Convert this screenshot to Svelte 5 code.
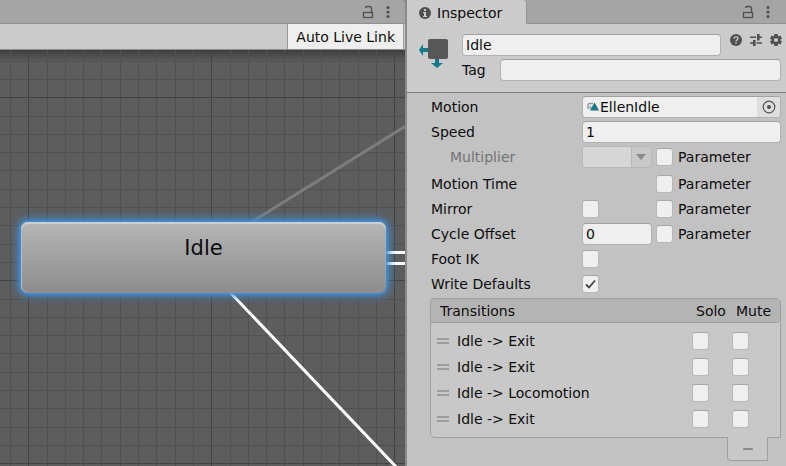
<script>
  const steps = Array.from({ length: 120 }, (_, i) => i - 5);
  const vertical = steps.map((i) => ({ at: Math.floor(28.7 + i * 18.3), major: i % 10 === 0 }));
  const horizontal = steps.map((i) => ({ at: Math.floor(47.7 + i * 18.3), major: i % 10 === 0 }));

  const transitions = ['Idle -> Exit', 'Idle -> Exit', 'Idle -> Locomotion', 'Idle -> Exit'];
</script>

{#snippet windowControls()}
  <div class="window-controls">
    <button aria-label="Lock">
      <svg width="12" height="14" viewBox="0 0 12 14" fill="none" stroke="#505050" stroke-width="1.3">
        <rect x="1.5" y="7.5" width="9" height="5" />
        <path d="M9.5 7V3.5Q9.5 1.5 7.5 1.5H5.5Q3.5 1.5 3.5 3" />
      </svg>
    </button>
    <button aria-label="Menu">
      <svg width="4" height="14" viewBox="0 0 4 14" fill="#505050">
        <circle cx="2" cy="2.5" r="1.6" /><circle cx="2" cy="7" r="1.6" /><circle cx="2" cy="11.5" r="1.6" />
      </svg>
    </button>
  </div>
{/snippet}

{#snippet parameter(id)}
  <div class="param">
    <input type="checkbox" {id} />
    <label for={id}>Parameter</label>
  </div>
{/snippet}

<div class="editor">
  <section class="animator">
    <div class="tabbar">{@render windowControls()}</div>
    <div class="toolbar"><button>Auto Live Link</button></div>
    <div class="canvas">
      <svg class="graph" width="100%" height="100%">
        {#each vertical as line}
          <rect x={line.at} y="0" width="1" height="100%" class:major={line.major} class="grid" />
        {/each}
        {#each horizontal as line}
          <rect x="0" y={line.at} width="100%" height="1" class:major={line.major} class="grid" />
        {/each}
        <path d="M242 178L430 61" stroke="#7d7d7d" stroke-width="3" />
        <path d="M380 202.5H440M380 213.5H440M225 237L420 442" stroke="#fff" stroke-width="3" />
      </svg>
      <div class="node">Idle</div>
    </div>
  </section>

  <section class="inspector">
    <div class="tabbar">
      <div class="tab">
        <svg width="12" height="12" viewBox="0 0 12 12">
          <circle cx="6" cy="6" r="6" fill="#505050" />
          <path d="M5 2h2v2H5zM4 5H7v4h1v1H4V9h1V6H4z" fill="#cbcbcb" />
        </svg>
        <span>Inspector</span>
      </div>
      {@render windowControls()}
    </div>

    <header>
      <svg class="state-icon" width="30" height="30" viewBox="0 0 30 30">
        <path d="M0 12L4 6V10H9V14H4V18zM16 20H20V25H24L18 30L12 25H16z" fill="#16798a" />
        <rect x="9" y="1" width="20" height="20" rx="2" fill="#575757" />
      </svg>
      <div class="identity">
        <div class="name-row">
          <input type="text" aria-label="Name" value="Idle" />
          <div class="tools">
            <button aria-label="Help">
              <svg width="12" height="12" viewBox="0 0 12 12">
                <circle cx="6" cy="6" r="6" fill="#505050" />
                <path d="M4 4.7Q4 2.8 6 2.8T8 4.5Q8 5.3 7 5.9T6 7.5" fill="none" stroke="#cbcbcb" stroke-width="1.3" />
                <rect x="5.3" y="8.4" width="1.4" height="1.4" fill="#cbcbcb" />
              </svg>
            </button>
            <button aria-label="Presets">
              <svg width="12" height="12" viewBox="0 0 12 12" fill="#505050">
                <path d="M0 2.5h6V4H0zM7 0h2.6v2.5H12V4H9.600v2.500H7zM0 8.200h3V6h2.600v6H3V9.700H0zM6.500 8.200H12v1.500H6.500z" />
              </svg>
            </button>
            <button aria-label="Settings">
              <svg width="12" height="12" viewBox="0 0 12 12">
                <g fill="#505050">
                  <rect x="4.2" width="3.6" height="12" rx=".5" />
                  <rect x="4.2" width="3.6" height="12" rx=".5" transform="rotate(60 6 6)" />
                  <rect x="4.2" width="3.6" height="12" rx=".5" transform="rotate(120 6 6)" />
                </g>
                <circle cx="6" cy="6" r="3.300" fill="#cbcbcb" stroke="#505050" stroke-width="2.400" />
              </svg>
            </button>
          </div>
        </div>
        <div class="tag-row">
          <label for="tag">Tag</label>
          <input type="text" id="tag" />
        </div>
      </div>
    </header>

    <div class="properties">
      <div class="row">
        <label for="motion">Motion</label>
        <div class="object-field">
          <svg width="12" height="12" viewBox="0 0 12 12">
            <path d="M1 8V4.500Q1 2.500 3 2.500H6M3.500 8V5" fill="none" stroke="#8d9a9c" stroke-width="1.500" />
            <path d="M7.500 1.500L12 9.500H3z" fill="#16798a" />
          </svg>
          <input type="text" id="motion" value="EllenIdle" />
          <button aria-label="Select motion">
            <svg width="14" height="14" viewBox="0 0 14 14">
              <circle cx="7" cy="7" r="5.800" fill="none" stroke="#505050" stroke-width="1.200" />
              <circle cx="7" cy="7" r="2" fill="#505050" />
            </svg>
          </button>
        </div>
      </div>
      <div class="row">
        <label for="speed">Speed</label>
        <input type="text" id="speed" value="1" />
      </div>
      <div class="row">
        <label class="disabled" for="multiplier">Multiplier</label>
        <div class="split">
          <div class="select">
            <select id="multiplier" disabled><option></option></select>
            <svg width="10" height="6" viewBox="0 0 10 6"><path d="M0 0H10L5 6z" fill="#8a8a8a" /></svg>
          </div>
          {@render parameter('multiplier-param')}
        </div>
      </div>
      <div class="row group">
        <span>Motion Time</span>
        <div class="split"><span></span>{@render parameter('time-param')}</div>
      </div>
      <div class="row">
        <label for="mirror">Mirror</label>
        <div class="split"><input type="checkbox" id="mirror" />{@render parameter('mirror-param')}</div>
      </div>
      <div class="row">
        <label for="offset">Cycle Offset</label>
        <div class="split"><input type="text" id="offset" value="0" />{@render parameter('offset-param')}</div>
      </div>
      <div class="row">
        <label for="foot">Foot IK</label>
        <input type="checkbox" id="foot" />
      </div>
      <div class="row">
        <label for="defaults">Write Defaults</label>
        <input type="checkbox" id="defaults" checked />
      </div>
    </div>

    <div class="transitions">
      <table>
        <thead>
          <tr><th class="title">Transitions</th><th class="toggle">Solo</th><th class="toggle">Mute</th></tr>
        </thead>
        <tbody>
          {#each transitions as name}
            <tr>
              <td>
                <div class="transition">
                  <svg width="12" height="6" viewBox="0 0 12 6"><path d="M0 1H12M0 5H12" stroke="#8d8d8d" stroke-width="1.300" /></svg>
                  <span>{name}</span>
                </div>
              </td>
              <td><input type="checkbox" aria-label="Solo {name}" /></td>
              <td><input type="checkbox" aria-label="Mute {name}" /></td>
            </tr>
          {/each}
        </tbody>
      </table>
      <button class="remove" aria-label="Remove transition">
        <svg width="10" height="2" viewBox="0 0 10 2"><rect width="10" height="2" rx="1" fill="#8a8a8a" /></svg>
      </button>
    </div>
  </section>
</div>

<style>
  * { box-sizing: border-box; }

  .editor {
    display: grid;
    grid-template-columns: minmax(0, 405fr) minmax(0, 381fr);
    min-height: 100vh;
    font: 14px/20px 'DejaVu Sans', Verdana, sans-serif;
    color: #0c0c0c;
    background: #c2c2c2;
  }

  button {
    display: flex;
    align-items: center;
    justify-content: center;
    padding: 0;
    border: 0;
    background: none;
    font: inherit;
    color: inherit;
  }
  svg { display: block; flex: none; }

  .tabbar {
    display: flex;
    height: 24px;
    background: #a5a5a5;
    border-bottom: 1px solid #8f8f8f;
  }
  .window-controls {
    display: flex;
    align-items: center;
    gap: 12px;
    margin-left: auto;
    padding-right: 15px;
  }
  .inspector .window-controls { padding-right: 16px; }

  .animator { display: flex; flex-direction: column; background: #8a8a8a; }
  .animator .tabbar { border-top-right-radius: 4px; }
  .toolbar {
    display: flex;
    justify-content: flex-end;
    height: 26px;
    padding-right: 1px;
    background: #cbcbcb;
    border-bottom: 1px solid #8c8c8c;
  }
  .toolbar button {
    padding: 0 8px;
    background: #efefef;
    border: solid #999;
    border-width: 0 1px;
  }

  .canvas {
    position: relative;
    flex: 1;
    overflow: hidden;
    background: #5d5d5d;
  }
  .canvas::before {
    content: '';
    position: absolute;
    inset: 0 0 auto;
    height: 12px;
    background: linear-gradient(#0005, #0000);
  }
  .graph { position: absolute; inset: 0; }
  .grid { fill: #515151; }
  .grid.major { fill: #434343; }
  .node {
    position: absolute;
    left: 21px;
    top: 172px;
    width: 365px;
    height: 71px;
    padding-top: 14px;
    border-radius: 7px;
    font-size: 21px;
    line-height: 24px;
    text-align: center;
    background: linear-gradient(#b6b6b6, #8c8c8c);
    box-shadow: 0 0 3px 1px #3f93e0, 0 0 9px 3px #3f8fd8, inset 0 2px 1px #d0d0d0, inset 1px 0 1px #b8b8b8;
  }

  .inspector { border-left: 2px solid #8a8a8a; }
  .tab {
    display: flex;
    align-items: center;
    gap: 6px;
    height: 24px;
    padding: 2px 24px 0 12px;
    background: #cbcbcb;
    border-right: 1px solid #959595;
    border-top-right-radius: 4px;
  }

  input[type='text'] {
    display: block;
    width: 100%;
    min-width: 0;
    height: 22px;
    padding: 0 3px;
    border: 1px solid #b2b2b2;
    border-top-color: #a0a0a0;
    border-radius: 4px;
    background: #efefef;
    font: inherit;
    color: inherit;
  }
  input[type='checkbox'] {
    display: block;
    appearance: none;
    width: 17px;
    height: 18px;
    margin: 0;
    border: 1px solid #b8b8b8;
    border-top-color: #a6a6a6;
    border-radius: 3px;
    background: #efefef;
  }
  input[type='checkbox']:checked {
    background: #efefef url("data:image/svg+xml,%3Csvg xmlns='http://www.w3.org/2000/svg' viewBox='0 0 15 16'%3E%3Cpath d='M3 8.500L6 11.500L12 4.500' fill='none' stroke='%23444' stroke-width='1.800'/%3E%3C/svg%3E") center / 15px 16px no-repeat;
  }

  header {
    display: flex;
    gap: 13px;
    padding: 10px 5px 11px 12px;
    background: #cbcbcb;
    border-bottom: 1px solid #808080;
  }
  .state-icon { margin-top: 4px; }
  .identity { flex: 1; min-width: 0; }
  .name-row { display: flex; gap: 9px; }
  .tools {
    display: flex;
    gap: 8px;
    padding: 0 0 10px;
    margin-right: -1px;
  }
  .tag-row {
    display: flex;
    align-items: center;
    gap: 14px;
    margin-top: 3px;
  }

  .properties {
    display: grid;
    gap: 3px;
    padding: 3px 5px 3px 24px;
  }
  .row {
    display: grid;
    grid-template-columns: 151px minmax(0, 1fr);
    align-items: center;
    height: 22px;
  }
  .row.group { margin-top: 2px; }
  .disabled { padding-left: 19px; color: #737373; }
  .split {
    display: grid;
    grid-template-columns: 70px 1fr;
    align-items: center;
    gap: 4px;
  }
  .param { display: flex; align-items: center; gap: 5px; }

  .object-field {
    display: flex;
    align-items: center;
    height: 22px;
    padding-left: 4px;
    border: 1px solid #b2b2b2;
    border-top-color: #a0a0a0;
    border-radius: 4px;
    background: #efefef;
    overflow: hidden;
  }
  .object-field input[type='text'] {
    flex: 1;
    padding: 0 1px;
    border: 0;
    background: none;
  }
  .object-field button { flex: none; width: 23px; height: 20px; background: #dedede; }

  .select { display: grid; align-items: center; }
  .select > * { grid-area: 1 / 1; }
  .select select {
    width: 100%;
    height: 22px;
    appearance: none;
    border: 1px solid #b8b8b8;
    border-radius: 3px;
    opacity: 1;
    background: linear-gradient(90deg, #d6d6d6 48px, #b8b8b8 48px 49px, #c8c8c8 49px);
  }
  .select svg { justify-self: end; margin-right: 6px; }

  .transitions { padding: 0 5px 6px 23px; }
  table {
    width: 100%;
    border-collapse: separate;
    border-spacing: 0;
    table-layout: fixed;
    border: 1px solid #9f9f9f;
    border-radius: 3px 5px 0 5px;
    background: #c8c8c8;
  }
  th {
    height: 24px;
    padding: 0;
    font-weight: normal;
    text-align: left;
    background: #b4b4b4;
    border-bottom: 1px solid #9f9f9f;
  }
  th.title { padding-left: 9px; }
  .toggle { width: 40px; }
  th:last-child { width: 44px; border-radius: 0 4px 4px 0; }
  td { height: 26px; padding: 0; }
  td input { margin-left: -4px; }
  td input[type='checkbox'] { margin-left: -4px; }
  tbody::before, tbody::after { content: ''; display: block; height: 5px; }
  .transition { display: flex; align-items: center; gap: 8px; padding-left: 6px; }
  .remove {
    width: 41px;
    height: 24px;
    margin: -1px 13px 0 auto;
    background: #c8c8c8;
    border: 1px solid #9f9f9f;
    border-top: 0;
    border-radius: 0 0 0 4px;
  }
</style>
